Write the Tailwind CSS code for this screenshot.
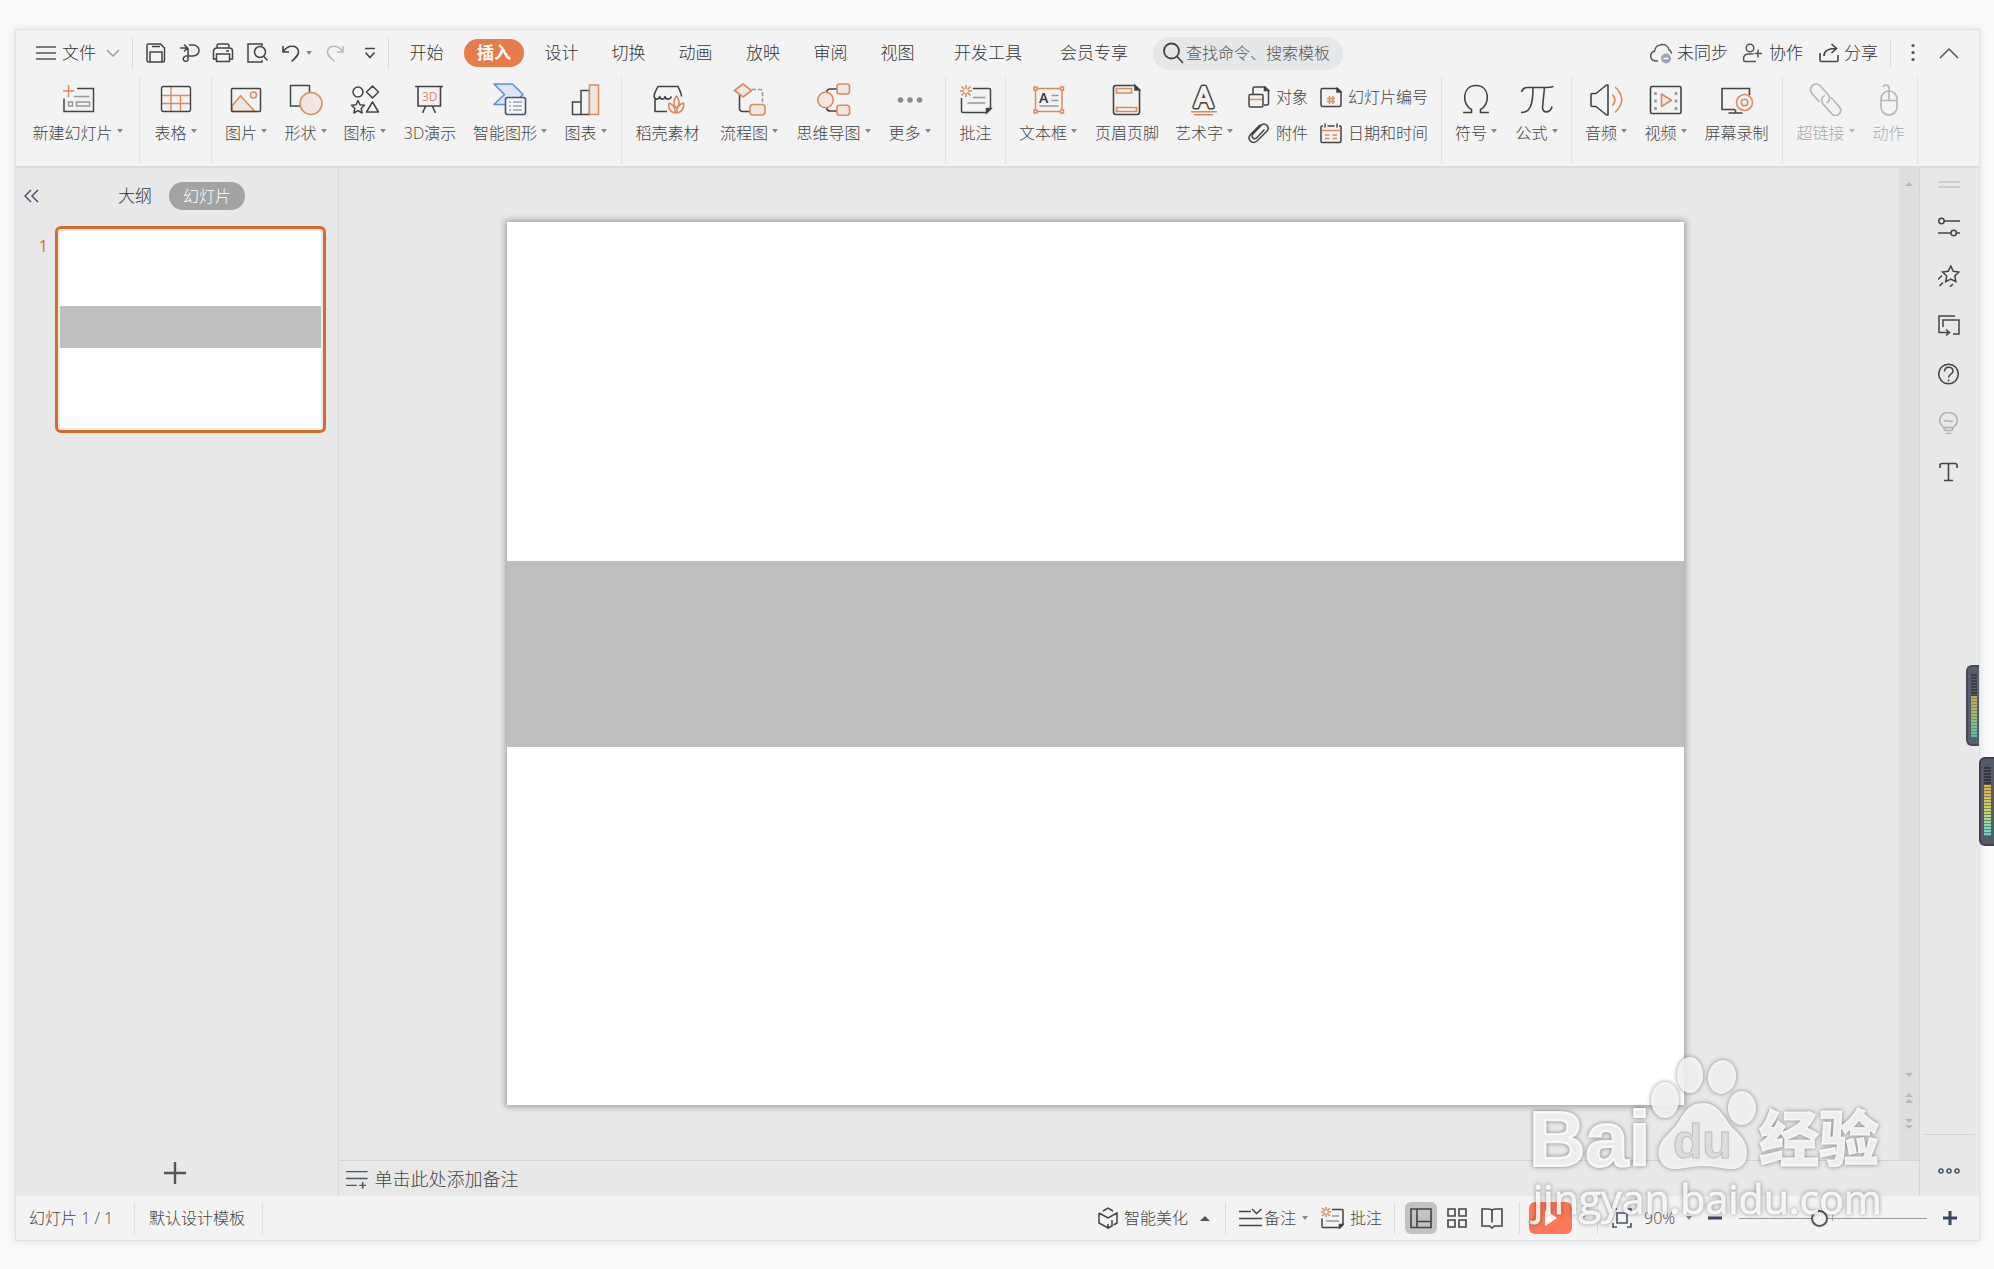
<!DOCTYPE html>
<html lang="zh-CN">

<head>
    <meta charset="UTF-8">
    <meta name="viewport" content="width=device-width, initial-scale=1.0">
    <title>演示文稿</title>
    <script src="https://cdn.jsdelivr.net/npm/@tailwindcss/browser@4"></script>
</head>

<body class="relative h-screen overflow-hidden bg-[#f7f9fb] pt-[29px] pb-7 pl-[15px] pr-[14px] font-['Open_Sans','Noto_Sans_CJK_SC',sans-serif] font-light text-base text-[#333]">
    <div class="relative flex h-full flex-col border border-[#dfe1e3] bg-[#f3f3f3] shadow-[0_0_8px_rgba(0,0,0,0.1)]">

        <!-- menu bar -->
        <header class="flex h-[46px] shrink-0 items-center text-[17px]">
            <button class="ml-5 flex items-center">
                <svg class="h-5 w-5" viewBox="0 0 20 20" fill="none" stroke="#555" stroke-width="1.6"><path d="M0 4h20M0 10h20M0 16h20" /></svg>
                <span class="ml-[6px]">文件</span>
                <svg class="ml-[10px] h-3 w-[14px]" viewBox="0 0 14 12" fill="none" stroke="#999" stroke-width="1.4"><path d="M1 3l6 6 6-6" /></svg>
            </button>
            <div class="ml-3 h-8 w-px bg-[#dcdcdc]"></div>
            <div class="flex w-[255px] items-center pl-3">
                <button aria-label="保存"><svg class="h-[22px] w-[22px]" viewBox="0 0 22 22" fill="none" stroke="#444" stroke-width="1.5"><path d="M3.500 2h12l4 4v12.500a1.500 1.500 0 0 1-1.500 1.500h-14.500a1.500 1.500 0 0 1-1.500-1.500v-15a1.500 1.500 0 0 1 1.500-1.500zM5 20v-10h12v10M7 4.500h8" /></svg></button>
                <button aria-label="输出" class="ml-3"><svg class="h-[22px] w-[22px]" viewBox="0 0 22 22" fill="none" stroke="#444" stroke-width="1.5"><path d="M1 6h7M5 2.500l3.500 3.500-3.500 3.500M10 3h4a6 5.500 0 0 1 0 11h-8M9 6v12a2.500 2.500 0 1 1-3-3.500" /></svg></button>
                <button aria-label="打印" class="ml-[11px]"><svg class="h-[22px] w-[22px]" viewBox="0 0 22 22" fill="none" stroke="#444" stroke-width="1.5"><path d="M5 6v-2a2 2 0 0 1 2-2h8a2 2 0 0 1 2 2v2M4 17h-2.500v-8a3 3 0 0 1 3-3h13a3 3 0 0 1 3 3v8h-2.500M4.500 12h13v7.500h-13zM14 9h3" /></svg></button>
                <button aria-label="打印预览" class="ml-3"><svg class="h-[22px] w-[22px]" viewBox="0 0 22 22" fill="none" stroke="#444" stroke-width="1.500"><path d="M16 4v-2h-14v18h14v-2M17.500 14l4 4.500" /><circle cx="14" cy="10" r="5.500" /></svg></button>
                <button aria-label="撤销" class="ml-[14px] flex items-center"><svg class="h-[22px] w-[18px]" viewBox="0 0 18 22" fill="none" stroke="#444" stroke-width="1.6"><path d="M1 4v6h6M1.500 9.500c4-7 14-7 15 0 .4 3.500-2.500 6-7 10" /></svg><span class="ml-[6px] border-x-[3px] border-t-4 border-x-transparent border-t-[#888]"></span></button>
                <button aria-label="恢复" class="ml-[14px]"><svg class="h-[22px] w-[18px]" viewBox="0 0 18 22" fill="none" stroke="#bbb" stroke-width="1.6"><path d="M17 4v6h-6M16.500 9.500c-4-7-14-7-15 0-.4 3.500 2.500 6 7 10" /></svg></button>
                <button aria-label="更多命令" class="ml-5"><svg class="h-[14px] w-3" viewBox="0 0 12 14" fill="none" stroke="#444" stroke-width="1.6"><path d="M1 2.500h10M1.500 6.500l4.500 5 4.500-5" /></svg></button>
            </div>
            <div class="h-8 w-px bg-[#dcdcdc]"></div>
            <nav class="ml-1 flex items-center">
                <button class="w-[67px]">开始</button>
                <button class="mx-1 h-7 w-[60px] rounded-full bg-[#e87b4b] font-bold text-white">插入</button>
                <button class="w-[67px]">设计</button>
                <button class="w-[67px]">切换</button>
                <button class="w-[67px]">动画</button>
                <button class="w-[68px]">放映</button>
                <button class="w-[67px]">审阅</button>
                <button class="w-[67px]">视图</button>
                <button class="w-[114px]">开发工具</button>
                <button class="w-[98px]">会员专享</button>
            </nav>
            <label class="ml-[10px] flex h-[33px] w-[190px] items-center rounded-full bg-[#e5e7e9] pl-[9px]">
                <svg class="h-[22px] w-[22px] shrink-0" viewBox="0 0 22 22" fill="none" stroke="#444" stroke-width="1.8"><circle cx="9.500" cy="9" r="7.500" /><path d="M15 14.500l6 6.500" /></svg>
                <input type="text" aria-label="搜索" placeholder="查找命令、搜索模板" class="w-[156px] bg-transparent pl-[2px] text-base outline-none placeholder:text-[#555]">
            </label>
            <div class="ml-auto flex items-center">
                <button class="flex items-center gap-1"><svg class="h-6 w-6" viewBox="0 0 24 24" fill="none" stroke="#555" stroke-width="1.5"><path d="M9 20h-3a5 5 0 0 1-.5-9.800c.5-8 13-9 14.500-1.500 2 1 2.500 3 2 4" /><circle cx="17" cy="17.500" r="5" fill="#9aa5b8" stroke="none" /><path d="M14.500 17.500h5" stroke="#fff" /></svg>未同步</button>
                <button class="ml-[14px] flex items-center gap-[6px]"><svg class="h-[22px] w-[21px]" viewBox="0 0 21 22" fill="none" stroke="#555" stroke-width="1.500"><circle cx="8" cy="6" r="3.800" /><path d="M14 19.500h-11c-1.500 0-1.500-1.500-1.500-2.500 0-3 2-5 5-5h5M16 7.500v8M12.500 11.500h7.500" /></svg>协作</button>
                <button class="ml-4 flex items-center gap-1"><svg class="h-[22px] w-[21px]" viewBox="0 0 21 22" fill="none" stroke="#444" stroke-width="1.600"><path d="M1 11v7q0 1.500 1.500 1.500h15q1.500 0 1.500-1.500v-5M5 14c0-5 4-7.500 12-7.500M12.500 2l5 4.500-5 4.500" /></svg>分享</button>
                <div class="ml-3 h-7 w-px bg-[#dcdcdc]"></div>
                <button aria-label="更多" class="ml-5"><svg class="h-5 w-1" viewBox="0 0 4 20" fill="#555"><circle cx="2" cy="2.500" r="1.600" /><circle cx="2" cy="9.500" r="1.600" /><circle cx="2" cy="16.500" r="1.600" /></svg></button>
                <button aria-label="收起功能区" class="ml-6 mr-5"><svg class="h-3 w-5" viewBox="0 0 20 12" fill="none" stroke="#555" stroke-width="1.500"><path d="M1 11l9-9 9 9" /></svg></button>
            </div>
        </header>

        <!-- ribbon -->
        <div class="flex h-[92px] shrink-0 border-b-2 border-[#dcdcdc] pt-px pb-[2px] text-[#444]">
            <div class="flex">
                <button class="flex w-[123px] flex-col items-center pt-[5px]">
                    <svg class="h-[34px] w-[34px]" viewBox="0 0 34 34" fill="none" stroke="#444" stroke-width="1.500"><path d="M16 6.500h16.500v23h-29.500v-13" /><path d="M7.500 3v12M2 9h11.500" stroke="#d98c5f" /><path d="M13 14.500h15.500M7.500 20h4v4h-4zM15.500 20h13v4h-13z" stroke="#999" /></svg>
                    <span class="mt-[5px] flex h-6 items-center whitespace-nowrap">新建幻灯片<i class="ml-1 mb-1 border-x-[3px] border-t-4 border-x-transparent border-t-[#888]"></i></span>
                </button>
            </div>
            <div class="flex border-l border-[#e2e2e2]">
                <button class="flex w-[71px] flex-col items-center pt-[5px]">
                    <svg class="h-[34px] w-[34px]" viewBox="0 0 34 34" fill="none" stroke="#d98c5f" stroke-width="1.400"><path d="M12 4.500v25M21.500 13.500v16M2.500 13.500h29M2.500 21.500h29" /><rect x="2.500" y="4.500" width="29" height="25" rx="2" stroke="#444" /></svg>
                    <span class="mt-[5px] flex h-6 items-center whitespace-nowrap">表格<i class="ml-1 mb-1 border-x-[3px] border-t-4 border-x-transparent border-t-[#888]"></i></span>
                </button>
            </div>
            <div class="flex border-l border-[#e2e2e2] px-1">
                <button class="flex w-[60px] flex-col items-center pt-[5px]">
                    <svg class="h-[34px] w-[34px]" viewBox="0 0 34 34" fill="none" stroke="#d98c5f" stroke-width="1.500"><path d="M3 24l8.500-10 14.500 15.500h-23z" fill="#f1e6e0" /><circle cx="24.500" cy="13" r="3" /><rect x="2.500" y="6.500" width="29" height="23" rx="1" stroke="#444" /></svg>
                    <span class="mt-[5px] flex h-6 items-center whitespace-nowrap">图片<i class="ml-1 mb-1 border-x-[3px] border-t-4 border-x-transparent border-t-[#888]"></i></span>
                </button>
                <button class="flex w-[59px] flex-col items-center pt-[5px]">
                    <svg class="h-[34px] w-[34px]" viewBox="0 0 34 34" fill="none" stroke="#444" stroke-width="1.500"><rect x="1.500" y="3.500" width="19" height="20.500" /><circle cx="22" cy="21.500" r="11" fill="#f1e6e0" stroke="#d98c5f" /></svg>
                    <span class="mt-[5px] flex h-6 items-center whitespace-nowrap">形状<i class="ml-1 mb-1 border-x-[3px] border-t-4 border-x-transparent border-t-[#888]"></i></span>
                </button>
                <button class="flex w-[59px] flex-col items-center pt-[5px]">
                    <svg class="h-[34px] w-[34px]" viewBox="0 0 34 34" fill="none" stroke="#444" stroke-width="1.500" stroke-linejoin="round"><circle cx="10" cy="10" r="5" /><path d="M24.500 4l6 6-6 6-6-6zM24.500 20l6 10h-12zM10 18.500l2 4.300 4.500.5-3.300 3.200.9 4.500-4.100-2.300-4.100 2.300.9-4.500-3.300-3.200 4.500-.5z" /></svg>
                    <span class="mt-[5px] flex h-6 items-center whitespace-nowrap">图标<i class="ml-1 mb-1 border-x-[3px] border-t-4 border-x-transparent border-t-[#888]"></i></span>
                </button>
                <button class="flex w-[72px] flex-col items-center pt-[5px]">
                    <svg class="h-[34px] w-[34px]" viewBox="0 0 34 34" fill="none" stroke="#444" stroke-width="1.600"><path d="M2 4.500h28M5 4.500v19.500h22.500v-19.500M12.500 24.500l-3 6.500M19.500 24.500l3 6.500" /><text x="9" y="18.500" font-size="12" font-weight="400" fill="#d98c5f" stroke="none" font-family="Open Sans">3D</text></svg>
                    <span class="mt-[5px] flex h-6 items-center whitespace-nowrap">3D演示</span>
                </button>
                <button class="flex w-[88px] flex-col items-center pt-[5px]">
                    <svg class="h-[34px] w-[34px]" viewBox="0 0 34 34" fill="none" stroke-width="1.600" stroke-linejoin="round"><path d="M1 2h18.500l10.500 10.500-10 10h-19l10.500-10z" fill="#dfe7f7" stroke="#5a8cf0" /><rect x="12.500" y="15.500" width="20" height="17" rx="2" fill="#f5f7fb" stroke="#49546b" /><path d="M16 20h2M20 20h9M16 24h2M20 24h9M16 28h2M20 28h9" stroke="#9aa3b5" /></svg>
                    <span class="mt-[5px] flex h-6 items-center whitespace-nowrap">智能图形<i class="ml-1 mb-1 border-x-[3px] border-t-4 border-x-transparent border-t-[#888]"></i></span>
                </button>
                <button class="flex w-[63px] flex-col items-center pt-[5px]">
                    <svg class="h-[34px] w-[34px]" viewBox="0 0 34 34" fill="none" stroke="#444" stroke-width="1.500"><path d="M3.500 20h8.500v12.500h-8.500zM12 8.500h8.500v24h-8.500z" /><path d="M20.500 3h9v29.500h-9z" fill="#f1e6e0" stroke="#d98c5f" /></svg>
                    <span class="mt-[5px] flex h-6 items-center whitespace-nowrap">图表<i class="ml-1 mb-1 border-x-[3px] border-t-4 border-x-transparent border-t-[#888]"></i></span>
                </button>
            </div>
            <div class="flex border-l border-[#e2e2e2] px-1">
                <button class="flex w-[83px] flex-col items-center pt-[5px]">
                    <svg class="h-[34px] w-[34px]" viewBox="0 0 34 34" fill="none" stroke="#444" stroke-width="1.600" stroke-linejoin="round"><path d="M4 17.500v12h12M30.500 14.500c0-4-2-6-3.500-10h-20c-2 4-4 6-4 10 1 3.500 5 3.500 5.500 0 1 3.500 5 3.500 5.500 0 1 3.500 5 3.500 6.500 0" /><path d="M25.500 14c-3.500 4-3.500 9 0 12 3.500-3 3.500-8 0-12zM18 21c-1 5 1 9.500 6 10 .5-5-2-8.500-6-10zM32.500 21c1 5-2 9.500-7 10 0-5 2.500-8.500 7-10z" stroke="#d98c5f" fill="#f3f3f3" /></svg>
                    <span class="mt-[5px] flex h-6 items-center whitespace-nowrap">稻壳素材</span>
                </button>
                <button class="flex w-[80px] flex-col items-center pt-[5px]">
                    <svg class="h-[34px] w-[34px]" viewBox="0 0 34 34" fill="none" stroke="#444" stroke-width="1.600" stroke-linejoin="round"><path d="M7.500 13v13.500a3 3 0 0 0 3 3h7.500" /><path d="M20 7.500h8.500a2 2 0 0 1 2 2v12" stroke="#999" stroke-dasharray="4 2" /><path d="M11 2l8.500 6.500-8.500 6.500-8.500-6.500z" fill="#f1e6e0" stroke="#d98c5f" /><rect x="18" y="22.500" width="15" height="10.500" rx="3" fill="#f1e6e0" stroke="#d98c5f" /></svg>
                    <span class="mt-[5px] flex h-6 items-center whitespace-nowrap">流程图<i class="ml-1 mb-1 border-x-[3px] border-t-4 border-x-transparent border-t-[#888]"></i></span>
                </button>
                <button class="flex w-[89px] flex-col items-center pt-[5px]">
                    <svg class="h-[34px] w-[34px]" viewBox="0 0 34 34" fill="none" stroke="#444" stroke-width="1.600"><path d="M9.500 10q.5-3 4-3h6.500M9.500 26q.5 3 4 3h6.500" /><g fill="#f1e6e0" stroke="#d98c5f"><circle cx="8.500" cy="18" r="7.700" /><rect x="20" y="2" width="12.500" height="10" rx="2.500" /><rect x="20" y="23.200" width="12.500" height="10" rx="2.500" /></g></svg>
                    <span class="mt-[5px] flex h-6 items-center whitespace-nowrap">思维导图<i class="ml-1 mb-1 border-x-[3px] border-t-4 border-x-transparent border-t-[#888]"></i></span>
                </button>
                <button class="flex w-[63px] flex-col items-center pt-[5px]">
                    <svg class="h-[34px] w-[34px]" viewBox="0 0 34 34" fill="#8c8c8c"><circle cx="7.500" cy="18" r="2.800" /><circle cx="17" cy="18" r="2.800" /><circle cx="26.500" cy="18" r="2.800" /></svg>
                    <span class="mt-[5px] flex h-6 items-center whitespace-nowrap">更多<i class="ml-1 mb-1 border-x-[3px] border-t-4 border-x-transparent border-t-[#888]"></i></span>
                </button>
            </div>
            <div class="flex border-l border-[#e2e2e2] px-1">
                <button class="flex w-[51px] flex-col items-center pt-[5px]">
                    <svg class="h-[34px] w-[34px]" viewBox="0 0 34 34" fill="none" stroke="#444" stroke-width="1.500"><path d="M14 6.500h16q1.500 0 1.500 1.500v19l-3.500 3.500h-24q-1.500 0-1.500-1.500v-13" /><path d="M27.500 31v-4.500h4.500z" fill="#333" /><path d="M14 15.500h12.500M8.500 21h18" stroke="#999" /><path d="M7 3v4M7 11v4M1 9h4M9 9h4M2.500 4.500l3 3M8.500 10.500l3 3M11.500 4.500l-3 3M5.500 10.500l-3 3" stroke="#d98c5f" /></svg>
                    <span class="mt-[5px] flex h-6 items-center whitespace-nowrap">批注</span>
                </button>
            </div>
            <div class="flex border-l border-[#e2e2e2] px-1">
                <button class="flex w-[76px] flex-col items-center pt-[5px]">
                    <svg class="h-[34px] w-[34px]" viewBox="0 0 34 34" fill="none" stroke="#d98c5f" stroke-width="1.500"><path d="M4.500 6.500h26.500v23h-26.500z" /><path d="M3 5h3v3h-3zM29.500 5h3v3h-3zM3 28h3v3h-3zM29.500 28h3v3h-3z" fill="#f3f3f3" /><path d="M20.500 13.500h7M20.500 18.500h7M8.500 24h19" stroke="#999" /><text x="8" y="20.500" font-size="14" font-weight="600" fill="#333" stroke="none" font-family="Open Sans">A</text></svg>
                    <span class="mt-[5px] flex h-6 items-center whitespace-nowrap">文本框<i class="ml-1 mb-1 border-x-[3px] border-t-4 border-x-transparent border-t-[#888]"></i></span>
                </button>
                <button class="flex w-[82px] flex-col items-center pt-[5px]">
                    <svg class="h-[34px] w-[34px]" viewBox="0 0 34 34" fill="none" stroke="#444" stroke-width="1.600"><path d="M6 3.500h19l4.500 4.500v22q0 2.500-2.500 2.500h-21q-2.500 0-2.500-2.500v-24q0-2.500 2.500-2.500z" /><path d="M25 3.500v4.500h4.500z" fill="#333" /><path d="M6.500 6.500h15v4.500h-15zM6.500 25.500h20v4h-20z" stroke="#d98c5f" /></svg>
                    <span class="mt-[5px] flex h-6 items-center whitespace-nowrap">页眉页脚</span>
                </button>
                <button class="flex w-[72px] flex-col items-center pt-[5px]">
                    <svg class="h-[34px] w-[34px] overflow-visible" viewBox="0 0 34 34" fill="none" stroke="#444"><text x="16.500" y="25" font-size="28" font-weight="400" text-anchor="middle" font-family="Open Sans" stroke-width="5" stroke-linejoin="round">A</text><text x="16.500" y="25" font-size="28" font-weight="400" text-anchor="middle" font-family="Open Sans" stroke="#f3f3f3" stroke-width="2" fill="#f3f3f3" stroke-linejoin="round">A</text><path d="M4 29.800h26M7 32.800h19" stroke="#d98c5f" stroke-width="1.500" /></svg>
                    <span class="mt-[5px] flex h-6 items-center whitespace-nowrap">艺术字<i class="ml-1 mb-1 border-x-[3px] border-t-4 border-x-transparent border-t-[#888]"></i></span>
                </button>
                <div class="mt-[2px] ml-2 grid h-[72px] grid-cols-[72px_117px] grid-rows-[36px_36px] items-center">
                    <button class="flex items-center gap-[6px] whitespace-nowrap">
                        <svg class="h-[22px] w-[22px]" viewBox="0 0 22 22" fill="none" stroke="#444" stroke-width="1.500"><path d="M5 8v-5.500q0-1.500 1.500-1.500h10.500l3.500 3.500v13q0 1.500-1.500 1.500h-3" /><path d="M16.500 1v3.500h4z" fill="#333" /><rect x="1" y="8.500" width="14" height="12.500" rx="1.500" /><path d="M2 13.500h12" stroke="#d98c5f" /></svg>对象</button>
                    <button class="flex items-center gap-[6px] whitespace-nowrap">
                        <svg class="h-[22px] w-[22px]" viewBox="0 0 22 22" fill="none" stroke="#444" stroke-width="1.500"><path d="M2.500 2.500h15l3.500 3.500v13q0 1.500-1.500 1.500h-17q-1.500 0-1.500-1.500v-15q0-1.500 1.500-1.500z" /><path d="M17 2.500v3.500h4z" fill="#333" /><path d="M9.500 10v8M13 10v8M7 12.500h8M7 15.500h8" stroke="#d98c5f" /></svg>幻灯片编号</button>
                    <button class="flex items-center gap-[6px] whitespace-nowrap">
                        <svg class="h-[22px] w-[22px]" viewBox="0 0 22 22" fill="none" stroke="#444" stroke-width="1.500"><path d="M12 3l-9.500 9.500c-4 4.500 1.500 10.500 6.500 6.500l10-10c3.500-4-2-9-5.500-6l-8.500 9c-2.500 3 1 6 3.500 4l7.500-8" stroke-linecap="round" /></svg>附件</button>
                    <button class="flex items-center gap-[6px] whitespace-nowrap">
                        <svg class="h-[22px] w-[22px]" viewBox="0 0 22 22" fill="none" stroke="#444" stroke-width="1.500"><path d="M3 4h-1q-1 0-1 1v14q0 1.500 1.500 1.500h17q1.500 0 1.500-1.500v-14q0-1-1-1h-1M7.500 4h7M5 1.500v4M17 1.500v4" /><path d="M1.500 8.500h19M5 13h4.500M12.500 13h4.500M5 16.500h4.500M12.500 16.500h4.500" stroke="#d98c5f" /></svg>日期和时间</button>
                </div>
            </div>
            <div class="flex border-l border-[#e2e2e2] px-1">
                <button class="flex w-[60px] flex-col items-center pt-[5px]">
                    <svg class="h-[34px] w-[34px]" viewBox="0 0 34 34" fill="none" stroke="#444" stroke-width="1.600"><path d="M4 30.500h8.500v-3c-10-5-9.500-24 4.500-24s14.500 19 4.500 24v3h8.500" /></svg>
                    <span class="mt-[5px] flex h-6 items-center whitespace-nowrap">符号<i class="ml-1 mb-1 border-x-[3px] border-t-4 border-x-transparent border-t-[#888]"></i></span>
                </button>
                <button class="flex w-[61px] flex-col items-center pt-[5px]">
                    <svg class="h-[34px] w-[34px]" viewBox="0 0 34 34" fill="none" stroke="#444" stroke-width="1.600"><path d="M1.500 10q1.500-4.500 6-4.500h18q5 0 8-1M13 5.500c0 18-3 25-12 25M24.500 5.500l-2 20c0 6 8 6 9.500-1" /></svg>
                    <span class="mt-[5px] flex h-6 items-center whitespace-nowrap">公式<i class="ml-1 mb-1 border-x-[3px] border-t-4 border-x-transparent border-t-[#888]"></i></span>
                </button>
            </div>
            <div class="flex border-l border-[#e2e2e2] px-1">
                <button class="flex w-[60px] flex-col items-center pt-[5px]">
                    <svg class="h-[34px] w-[34px]" viewBox="0 0 34 34" fill="none" stroke="#444" stroke-width="1.600" stroke-linejoin="round"><path d="M2 12.500q0-1 1-1h4l10.500-8.500h1.500v30h-1.500l-10.500-8.500h-4q-1 0-1-1z" /><path d="M23.500 12.500q5 5.500 0 11M26 5q13.500 12 0 25.500" stroke="#d98c5f" /></svg>
                    <span class="mt-[5px] flex h-6 items-center whitespace-nowrap">音频<i class="ml-1 mb-1 border-x-[3px] border-t-4 border-x-transparent border-t-[#888]"></i></span>
                </button>
                <button class="flex w-[59px] flex-col items-center pt-[5px]">
                    <svg class="h-[34px] w-[34px]" viewBox="0 0 34 34" fill="none" stroke="#444" stroke-width="1.600"><rect x="1.500" y="4.500" width="30.500" height="27" rx="1.500" /><path d="M6.500 10v18M27 10v18" stroke="#999" stroke-width="2.500" stroke-dasharray="3 4.500" /><path d="M12.500 12v12.500l10-6.300z" fill="#f1e6e0" stroke="#d98c5f" stroke-linejoin="round" /></svg>
                    <span class="mt-[5px] flex h-6 items-center whitespace-nowrap">视频<i class="ml-1 mb-1 border-x-[3px] border-t-4 border-x-transparent border-t-[#888]"></i></span>
                </button>
                <button class="flex w-[83px] flex-col items-center pt-[5px]">
                    <svg class="h-[34px] w-[34px]" viewBox="0 0 34 34" fill="none" stroke="#444" stroke-width="1.600"><path d="M29.500 13v-6.500h-27.500v21h13M15.500 27.500v3M8.500 31h14" /><circle cx="24.500" cy="20.500" r="8" stroke="#d98c5f" /><circle cx="24.500" cy="20.500" r="3.200" stroke="#d98c5f" /></svg>
                    <span class="mt-[5px] flex h-6 items-center whitespace-nowrap">屏幕录制</span>
                </button>
            </div>
            <div class="flex border-x border-[#e2e2e2] px-1 text-[#aaa]">
                <button disabled class="flex w-[77px] flex-col items-center pt-[5px]">
                    <svg class="h-[34px] w-[34px]" viewBox="0 0 34 34" fill="none" stroke="#b5b5b5" stroke-width="1.600"><path d="M10.500 20l-7.500-8.500c-4.500-6 3-12.500 8-8l8 9c3 3.500 1 7.500-1.500 8.500M22 15.500l8.500 9.500c4 5.500-3.500 11.500-7.500 7l-9-10c-2.500-3.500-1-7.500 2-8.500" /></svg>
                    <span class="mt-[5px] flex h-6 items-center whitespace-nowrap">超链接<i class="ml-1 mb-1 border-x-[3px] border-t-4 border-x-transparent border-t-[#bbb]"></i></span>
                </button>
                <button disabled class="flex w-[49px] flex-col items-center pt-[5px]">
                    <svg class="h-[34px] w-[34px]" viewBox="0 0 34 34" fill="none" stroke="#b5b5b5" stroke-width="1.600"><rect x="9" y="9" width="16" height="24" rx="8" /><path d="M9 18.500h16M17 18.500v-12q0-3.500-3-3.500-2.500 0-3 2" /></svg>
                    <span class="mt-[5px] flex h-6 items-center whitespace-nowrap">动作</span>
                </button>
            </div>
        </div>

        <!-- workspace -->
        <div class="flex min-h-0 flex-1 bg-[#e8e8e8]">
            <aside class="flex w-[323px] shrink-0 flex-col border-r border-[#d8d8d8]">
                <div class="mt-[14px] flex h-7 items-center">
                    <button aria-label="收起" class="ml-2"><svg class="h-[14px] w-[15px]" viewBox="0 0 15 14" fill="none" stroke="#49546b" stroke-width="1.500"><path d="M7 1l-6 6 6 6M14 1l-6 6 6 6" /></svg></button>
                    <button class="ml-[79px] w-[34px] text-[17px] whitespace-nowrap">大纲</button>
                    <button class="ml-[17px] h-7 w-[76px] rounded-full bg-[#a3a3a3] text-white">幻灯片</button>
                </div>
                <div class="mt-4 flex pr-3">
                    <span class="w-[39px] pt-2 pr-[7px] text-right font-normal text-[#d86b2c]">1</span>
                    <button aria-label="幻灯片 1" class="flex h-[207px] flex-1 flex-col rounded-md border-3 border-[#d86b2c] bg-[#ececec] p-[2px]">
                        <span class="w-full flex-[74] bg-white"></span>
                        <span class="w-full flex-[42] bg-[#bfbfbf]"></span>
                        <span class="w-full flex-[79] bg-white"></span>
                    </button>
                </div>
                <button aria-label="新建幻灯片" class="mt-auto mb-3 ml-[148px] w-[22px]"><svg class="h-[22px] w-[22px]" viewBox="0 0 22 22" stroke="#555" stroke-width="2.400"><path d="M11 0v22M0 11h22" /></svg></button>
            </aside>

            <main class="flex min-w-0 flex-1 flex-col">
                <div class="flex min-h-0 flex-1">
                    <div class="flex flex-1 pt-[54px] pr-[215px] pb-[55px] pl-[168px]">
                        <div class="flex flex-1 flex-col bg-white shadow-[0_0_6px_2px_rgba(0,0,0,0.3)]">
                            <div class="flex-[339]"></div>
                            <div class="flex-[185] bg-[#bfbfbf]"></div>
                            <div class="flex-[358]"></div>
                        </div>
                    </div>
                    <div class="flex w-5 flex-col items-center bg-[#dedede] pt-[14px] pb-[31px]">
                        <svg class="h-1 w-2" viewBox="0 0 8 4" fill="#b8b8b8"><path d="M0 4l4-4 4 4z" /></svg>
                        <svg class="mt-auto h-[58px] w-2" viewBox="0 0 8 58" fill="#b8b8b8"><path d="M0 2h8l-4 4zM0 26l4-4 4 4zM0 32l4-4 4 4zM0 48h8l-4 4zM0 54h8l-4 4z" /></svg>
                    </div>
                </div>
                <label class="flex h-9 items-center border-t border-[#d4d4d4] pl-[7px]">
                    <svg class="h-5 w-[22px]" viewBox="0 0 22 20" fill="none" stroke="#49546b" stroke-width="1.500"><path d="M0 2.500h22M0 9.500h22M0 16.500h11M17 13v7M13.500 16.500h7" /></svg>
                    <input type="text" aria-label="备注" placeholder="单击此处添加备注" class="ml-[7px] w-full bg-transparent text-lg outline-none placeholder:text-[#444]">
                </label>
            </main>

            <aside class="flex w-[60px] shrink-0 flex-col items-center border-l border-[#d4d4d4] pt-[13px] pr-[2px]">
                <svg class="h-[7px] w-[22px]" viewBox="0 0 22 7" stroke="#c4c4c4" stroke-width="1.400"><path d="M0 1h22M0 6h22" /></svg>
                <div class="mt-7 flex flex-col gap-[27px]">
                    <button aria-label="属性" class="h-[22px]"><svg class="h-[22px] w-[22px]" viewBox="0 0 22 22" fill="none" stroke="#444" stroke-width="1.500"><circle cx="3.500" cy="5" r="2.700" /><path d="M6 5h16M0 17h13M18.500 17h3.500" /><circle cx="15.700" cy="17" r="2.700" /></svg></button>
                    <button aria-label="动画" class="h-[22px]"><svg class="h-[22px] w-[22px]" viewBox="0 0 22 22" fill="none" stroke="#444" stroke-width="1.500"><path d="M12.800 1l2.500 5.200 5.700.8-4.200 4 1 5.700-5-2.700-5.100 2.700 1-5.700-4.200-4 5.700-.8zM4 10.500l-4 4M5 17.500l-3.500 3.500M15 19l-3 3" /></svg></button>
                    <button aria-label="切换" class="h-[22px]"><svg class="h-[22px] w-[22px]" viewBox="0 0 22 22" fill="none" stroke="#444" stroke-width="1.500"><path d="M17 2h-16v16.500h10M8 15.500l3.500 3-3.500 3M5 13v-7h16v14h-6" /></svg></button>
                    <button aria-label="帮助" class="h-[22px]"><svg class="h-[22px] w-[22px]" viewBox="0 0 22 22" fill="none" stroke="#444" stroke-width="1.500"><circle cx="10.500" cy="11" r="9.800" /><path d="M6.500 8.500c0-6 8.500-5.500 8.500-.5 0 3-4.500 3.500-4.500 6.500M10.500 16.500v2" /></svg></button>
                    <button aria-label="灵感" class="h-[22px]"><svg class="h-[22px] w-[22px]" viewBox="0 0 22 22" fill="none" stroke="#b0b0b0" stroke-width="1.500"><path d="M6 15.500c-8-6-3.500-15 4.500-15s12.500 9 4.500 15zM6 16q0 2.500 2 2.500h5q2 0 2-2.500M7.500 21.500h6M6 8c1 2.500 3 .5 4.500.5s2 2.500 4.500 0" /></svg></button>
                    <button aria-label="字体" class="h-[22px]"><svg class="h-[22px] w-[22px]" viewBox="0 0 22 22" fill="none" stroke="#444" stroke-width="1.600"><path d="M2 7v-2.500q0-2 2-2h13q2 0 2 2v2.500M10.500 2.500v17M6 19.500h9" /></svg></button>
                </div>
                <div class="mt-auto h-px w-[52px] bg-[#d4d4d4]"></div>
                <button aria-label="更多" class="mt-8 mb-[21px] h-[8px]"><svg class="h-[8px] w-[22px]" viewBox="0 0 22 8" fill="none" stroke="#49546b" stroke-width="1.600"><circle cx="3" cy="4" r="2" /><circle cx="11" cy="4" r="2" /><circle cx="19" cy="4" r="2" /></svg></button>
            </aside>
        </div>

        <!-- status bar -->
        <footer class="flex h-11 shrink-0 items-center text-[#444]">
            <span class="w-[118px] pl-[13px] whitespace-nowrap">幻灯片 1 / 1</span>
            <div class="h-8 w-px bg-[#e0e0e0]"></div>
            <span class="w-[127px] pl-[14px] whitespace-nowrap">默认设计模板</span>
            <div class="h-8 w-px bg-[#e0e0e0]"></div>
            <div class="ml-auto flex items-center whitespace-nowrap">
                <button class="flex w-[127px] items-center"><svg class="h-[22px] w-5" viewBox="0 0 20 22" fill="none" stroke="#444" stroke-width="1.500"><path d="M5 4l5-3 5 3M1 6l9 5 9-5v10l-3.500 2M1 6v10l9 5v-4M10 21l4-2v-6" /></svg><span class="ml-[6px]">智能美化</span><i class="ml-3 border-x-[5px] border-b-[5px] border-x-transparent border-b-[#555]"></i></button>
                <div class="h-8 w-px bg-[#dcdcdc]"></div>
                <button class="ml-[13px] flex w-[82px] items-center"><svg class="h-5 w-[23px]" viewBox="0 0 23 20" fill="none" stroke="#444" stroke-width="1.500"><path d="M0 3.500h12M13 1l4.500 4.500 5-4.500M0 10.500h23M0 17.500h23" /></svg><span class="ml-[2px]">备注</span><i class="ml-[6px] border-x-[3px] border-t-4 border-x-transparent border-t-[#888]"></i></button>
                <button class="flex w-[73px] items-center"><svg class="h-[22px] w-[23px]" viewBox="0 0 23 22" fill="none" stroke="#444" stroke-width="1.500"><path d="M11 2.500h10q1 0 1 1v14l-3 3h-17q-1 0-1-1v-8" /><path d="M18.500 21v-3.500h3.500z" fill="#333" /><path d="M11 9h7M5 14h13" stroke="#999" /><path d="M1 1l3 3M9 1l-3 3M1 9l3-3M9 9l-3-3M5 0v3M5 7v3M0 5h3M7 5h3" stroke="#d98c5f" /></svg><span class="ml-[6px]">批注</span></button>
                <div class="h-8 w-px bg-[#dcdcdc]"></div>
                <button aria-label="普通视图" class="ml-[10px] flex h-8 w-8 items-center justify-center rounded-md bg-[#c2c2c2]"><svg class="h-[22px] w-[22px]" viewBox="0 0 22 22" fill="none" stroke="#444" stroke-width="1.600"><path d="M1 2h20v18.500h-20zM7 2v18.500M7 14.500h14" /></svg></button>
                <button aria-label="幻灯片浏览" class="ml-[10px]"><svg class="h-5 w-5" viewBox="0 0 20 20" fill="none" stroke="#444" stroke-width="1.600"><path d="M1 1h7v7h-7zM12 1h7v7h-7zM1 12h7v7h-7zM12 12h7v7h-7z" /></svg></button>
                <button aria-label="阅读视图" class="ml-[14px]"><svg class="h-[22px] w-[22px]" viewBox="0 0 22 22" fill="none" stroke="#444" stroke-width="1.600"><path d="M11 3.500q-1-1.500-3-1.500h-7v17h7.500l2.500 2 2.500-2h7.500v-17h-7q-2 0-3 1.500zM11 3.500v12" /></svg></button>
                <div class="ml-4 h-8 w-px bg-[#dcdcdc]"></div>
                <button aria-label="放映" class="ml-[9px] flex h-8 w-[43px] items-center justify-center rounded-md bg-[#fb7858]"><svg class="h-4 w-[13px]" viewBox="0 0 13 16" fill="#fff"><path d="M1 0l12 8-12 8z" /></svg></button>
                <i class="ml-[7px] border-x-[3px] border-t-4 border-x-transparent border-t-[#888]"></i>
                <div class="ml-[12px] h-8 w-px bg-[#dcdcdc]"></div>
                <button aria-label="最佳显示比例" class="ml-[14px]"><svg class="h-5 w-5" viewBox="0 0 20 20" fill="none" stroke="#49546b" stroke-width="1.600"><path d="M1 5v-4h4M15 1h4v4M19 15v4h-4M5 19h-4v-4M5 5h10v10h-10z" /></svg></button>
                <button class="ml-3 flex w-12 items-center">90%<i class="ml-auto border-x-[3px] border-t-4 border-x-transparent border-t-[#888]"></i></button>
                <button aria-label="缩小" class="ml-4"><svg class="h-[14px] w-[14px]" viewBox="0 0 14 14" stroke="#3a4562" stroke-width="3"><path d="M0 7h14" /></svg></button>
                <div class="relative ml-[17px] flex h-[18px] w-[188px] items-center">
                    <span class="absolute left-[93px] top-[6px] h-[6px] w-px bg-[#aaa]"></span>
                    <input type="range" aria-label="缩放" min="0" max="100" value="42" class="relative h-[17px] w-full appearance-none bg-transparent [&::-webkit-slider-runnable-track]:h-px [&::-webkit-slider-runnable-track]:bg-[#999] [&::-webkit-slider-thumb]:-mt-2 [&::-webkit-slider-thumb]:h-[17px] [&::-webkit-slider-thumb]:w-[17px] [&::-webkit-slider-thumb]:appearance-none [&::-webkit-slider-thumb]:rounded-full [&::-webkit-slider-thumb]:border-2 [&::-webkit-slider-thumb]:border-[#555] [&::-webkit-slider-thumb]:bg-[#f3f3f3]">
                </div>
                <button aria-label="放大" class="ml-4 mr-[22px]"><svg class="h-[14px] w-[14px]" viewBox="0 0 14 14" stroke="#3a4562" stroke-width="3"><path d="M0 7h14M7 0v14" /></svg></button>
            </div>
        </footer>

        <!-- level meter docked inside the window edge -->
        <div class="absolute top-[635px] right-0 flex h-[81px] w-[13px] flex-col items-center rounded-l-md border-2 border-r-0 border-[#454a56] bg-[#585e6e] pt-[7px]">
            <div class="h-[22px] w-[6px] bg-[repeating-linear-gradient(#3b3f49_0_2px,#585e6e_2px_3px)]"></div>
            <div class="relative h-[41px] w-[6px] bg-linear-to-b from-[#c8a850] via-[#9cc068] to-[#4fc0b4]"><div class="absolute inset-0 bg-[repeating-linear-gradient(transparent_0_2px,#585e6e88_2px_3px)]"></div></div>
        </div>
    </div>

    <!-- level meter at the screen edge -->
    <div class="absolute top-[757px] right-0 flex h-[89px] w-[15px] flex-col items-center rounded-l-md border-2 border-r-0 border-[#3c404b] bg-[#545a69] pt-2">
        <div class="h-[18px] w-[7px] bg-[repeating-linear-gradient(#33363f_0_2px,#545a69_2px_3px)]"></div>
        <div class="relative h-[51px] w-[7px] bg-linear-to-b from-[#e8a848] via-[#c4d860] to-[#4fd8cc]"><div class="absolute inset-0 bg-[repeating-linear-gradient(transparent_0_2px,#545a69aa_2px_3px)]"></div></div>
    </div>

    <!-- watermark -->
    <svg class="pointer-events-none absolute right-[94px] bottom-[35px] h-[190px] w-[380px] drop-shadow-[0_0_2px_rgba(0,0,0,0.5)]" viewBox="0 0 380 190" fill="#fff" fill-opacity="0.85" font-family="Open Sans, Noto Sans CJK SC, sans-serif">
        <ellipse cx="145" cy="56" rx="14" ry="18" />
        <ellipse cx="170" cy="31" rx="13" ry="18" />
        <ellipse cx="202" cy="33" rx="14" ry="17" transform="rotate(10 202 33)" />
        <ellipse cx="222" cy="64" rx="14" ry="17" />
        <path d="M183 59c-20 0-20 18-33 29-10 9-14 18-10 28 8 16 25 6 43 6s36 10 43-6c3-12-1-20-10-29-12-10-15-28-33-28z" />
        <text x="9" y="122" font-size="78" font-weight="700" font-family="Liberation Sans" stroke="#fff" stroke-width="2" stroke-opacity="0.85">Bai</text>
        <text x="153" y="114" font-size="48" font-weight="700" font-family="Liberation Sans" fill="#dcdcdc" fill-opacity="1" stroke="#bdbdbd">du</text>
        <text x="239" y="117" font-size="60" font-weight="900" stroke="#fff" stroke-opacity="0.85">经验</text>
        <text x="13" y="170" font-size="41" font-weight="400" stroke="#fff" stroke-opacity="0.7">jingyan.baidu.com</text>
    </svg>
</body>

</html>
